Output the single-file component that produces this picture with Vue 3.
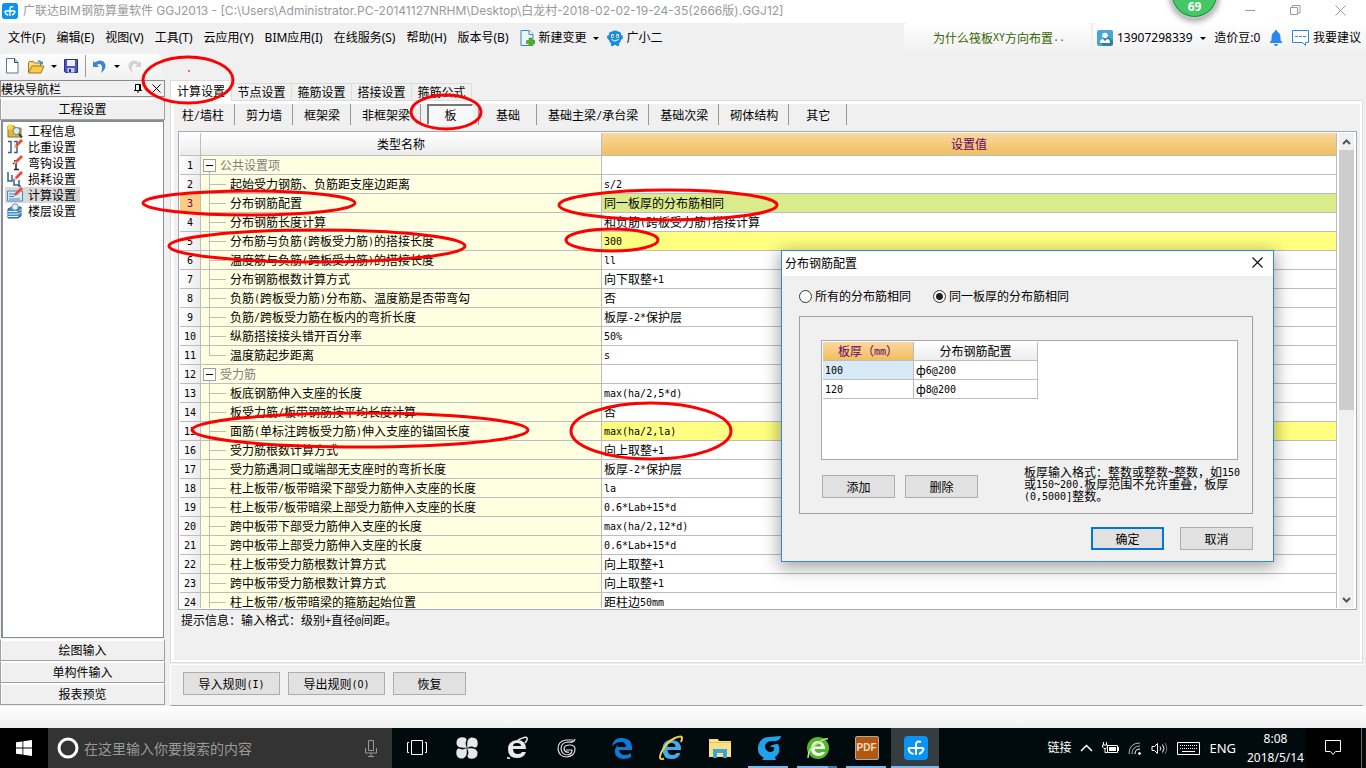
<script setup>
import { h, ref } from 'vue'

// Splits a label into Latin and Chinese runs so Latin runs get the half-width face.
const Mix = (props) =>
  (props.t.match(/[\x20-\x7e]+|[^\x20-\x7e]+/g) || []).map((run) =>
    /^[\x20-\x7e]/.test(run) ? h('span', { class: 'half' }, run) : run
  )
Mix.props = ['t']

const menus = ['文件(F)', '编辑(E)', '视图(V)', '工具(T)', '云应用(Y)', 'BIM应用(I)', '在线服务(S)', '帮助(H)', '版本号(B)']
const tabs = ['计算设置', '节点设置', '箍筋设置', '搭接设置', '箍筋公式']
const members = ['柱/墙柱', '剪力墙', '框架梁', '非框架梁', '板', '基础', '基础主梁/承台梁', '基础次梁', '砌体结构', '其它']
const nav = ['工程信息', '比重设置', '弯钩设置', '损耗设置', '计算设置', '楼层设置']
const folded = ['绘图输入', '单构件输入', '报表预览']
const rows = [
  { g: '公共设置项' },
  { n: '起始受力钢筋、负筋距支座边距离', v: 's/2' },
  { n: '分布钢筋配置', v: '同一板厚的分布筋相同', c: 'current' },
  { n: '分布钢筋长度计算', v: '和负筋(跨板受力筋)搭接计算' },
  { n: '分布筋与负筋(跨板受力筋)的搭接长度', v: '300', c: 'changed' },
  { n: '温度筋与负筋(跨板受力筋)的搭接长度', v: 'll' },
  { n: '分布钢筋根数计算方式', v: '向下取整+1' },
  { n: '负筋(跨板受力筋)分布筋、温度筋是否带弯勾', v: '否' },
  { n: '负筋/跨板受力筋在板内的弯折长度', v: '板厚-2*保护层' },
  { n: '纵筋搭接接头错开百分率', v: '50%' },
  { n: '温度筋起步距离', v: 's', last: true },
  { g: '受力筋' },
  { n: '板底钢筋伸入支座的长度', v: 'max(ha/2,5*d)' },
  { n: '板受力筋/板带钢筋按平均长度计算', v: '否' },
  { n: '面筋(单标注跨板受力筋)伸入支座的锚固长度', v: 'max(ha/2,la)', c: 'changed' },
  { n: '受力筋根数计算方式', v: '向上取整+1' },
  { n: '受力筋遇洞口或端部无支座时的弯折长度', v: '板厚-2*保护层' },
  { n: '柱上板带/板带暗梁下部受力筋伸入支座的长度', v: 'la' },
  { n: '柱上板带/板带暗梁上部受力筋伸入支座的长度', v: '0.6*Lab+15*d' },
  { n: '跨中板带下部受力筋伸入支座的长度', v: 'max(ha/2,12*d)' },
  { n: '跨中板带上部受力筋伸入支座的长度', v: '0.6*Lab+15*d' },
  { n: '柱上板带受力筋根数计算方式', v: '向上取整+1' },
  { n: '跨中板带受力筋根数计算方式', v: '向上取整+1' },
  { n: '柱上板带/板带暗梁的箍筋起始位置', v: '距柱边50mm' }
]
const mode = ref('same')
const rings = [
  [188, 80, 45, 23], [446, 112, 35, 17], [249, 203, 106, 12], [668, 205, 109, 15],
  [317, 246, 148, 16], [612, 240, 46, 11], [360, 430, 168, 17], [651, 431, 80, 28]
]
</script>

<template>
  <div class="desk">
    <header class="titlebar">
      <svg class="logo" width="16" height="16" viewBox="0 0 24 24"><rect width="24" height="24" rx="4" fill="#0a93f5" /><path d="M4.500 12h15M17 6q-5-2-5 3v10M4.500 12q0 5 5 6M19.500 12q0 4-4.500 6" fill="none" stroke="#fff" stroke-width="2.200" /></svg>
      <h1>广联达BIM钢筋算量软件 GGJ2013 - [C:\Users\Administrator.PC-20141127NRHM\Desktop\白龙村-2018-02-02-19-24-35(2666版).GGJ12]</h1>
      <div class="winbtns">
        <button aria-label="最小化"><svg width="11" height="11"><path d="M0 5.500h10" stroke="#999" /></svg></button>
        <button aria-label="还原"><svg width="11" height="11" fill="none" stroke="#999"><path d="M.5 2.500h7v7h-7zM2.500 2.500v-2h7.500v7.500h-2" /></svg></button>
        <button aria-label="关闭"><svg width="11" height="11"><path d="M.5.5l10 10M10.500.5l-10 10" stroke="#999" /></svg></button>
      </div>
    </header>

    <div class="menubar">
      <nav class="menus">
        <button v-for="m in menus" :key="m">{{ m }}</button>
        <button class="withicon"><svg width="15" height="16" viewBox="0 0 15 16"><path d="M1 .5h8l4 4v11H1z" fill="#eaf5fc" stroke="#3a86b8" /><path d="M9 .5v4h4" fill="#fff" stroke="#3a86b8" /><path d="M9 8h3v2.500h3v3h-3V16H9v-2.500H6.500v-3H9z" fill="#4db41e" stroke="#2c8a10" stroke-width=".5" /></svg>新建变更<i class="drop"></i></button>
        <button class="withicon mascot"><svg width="16" height="16" viewBox="0 0 16 16"><path d="M2 3q1-1.500 3-1.500 3-2 6 0 2 0 3 1.500v2q2 0 2 2t-2 3q-.5 2-2 3.500V16H9.500L9 15H7l-.5 1H4v-2.500Q2.500 12 2 10 0 9 0 7t2-2z" fill="#168fdf" /><ellipse cx="5.500" cy="6" rx="1.600" ry="2" fill="#fff" /><ellipse cx="10.500" cy="6" rx="1.600" ry="2" fill="#fff" /><circle cx="5.700" cy="6.300" r=".8" fill="#123" /><circle cx="10.300" cy="6.300" r=".8" fill="#123" /><path d="M4.500 9.500q3.500 3 7 0" fill="none" stroke="#fff" /></svg>广小二</button>
      </nav>
      <a class="tip" href="#"><Mix t="为什么筏板XY方向布置.." /></a>
      <div class="account">
        <button><svg width="16" height="16" viewBox="0 0 16 16"><rect width="16" height="16" rx="2" fill="#4aa6d5" /><path d="M9 5l7 6v3l-2 2H6l-3-4z" fill="#2e7faa" /><circle cx="8" cy="5.500" r="2.800" fill="#fff" /><path d="M3 13q0-4 3-4l2 2 2-2q3 0 3 4z" fill="#fff" /></svg>13907298339<i class="drop"></i></button>
        <span class="beans">造价豆:0</span>
        <button aria-label="消息" class="bell"><svg width="14" height="16" viewBox="0 0 14 16"><path d="M7 0q1.500 0 1.500 2Q11.500 3 11.500 8v2l2 3h-13l2-3V8q0-5 3-6Q5.500 0 7 0zM5 14h4q0 2-2 2t-2-2z" fill="#2a86f0" /></svg></button>
        <button><svg width="17" height="16" viewBox="0 0 17 16"><path d="M.5.500h16v12h-3v3l-3-3h-10z" fill="#fff" stroke="#2a86f0" /><path d="M3 6.500h11" stroke="#2a86f0" stroke-dasharray="3 1" /></svg>我要建议</button>
      </div>
    </div>

    <div class="toolbar">
      <button aria-label="新建"><svg width="13" height="16" viewBox="0 0 13 16"><path d="M.5.5h8l3.500 4v10.500H.5z" fill="#fff" stroke="#5b7592" /><path d="M8.500.5v4H12" fill="#cfe0f2" stroke="#2b3c55" /></svg></button>
      <button class="open" aria-label="打开"><svg width="17" height="15" viewBox="0 0 17 15"><path d="M.5 13.500V4l1-1.500h4l1 1.500h6v3" fill="#f7d87b" stroke="#9c7a1d" /><path d="M.5 14L4 7h12l-3 7z" fill="#fbc84a" stroke="#9c7a1d" /><path d="M9 2q3-2 5 1l1-1v3.500h-3l1-1q-2-2-4-2.500z" fill="#4f8fcc" /></svg><i class="drop"></i></button>
      <button class="save" aria-label="保存"><svg width="14" height="14" viewBox="0 0 14 14"><path d="M.5.5h13v13h-12l-1-1z" fill="#4a56c8" stroke="#27308c" /><path d="M3 1h8v6H3z" fill="#eef1fb" /><path d="M3.500 9h7v4.500h-7z" fill="#c8cdf0" /><path d="M5 10h2v3H5z" fill="#27308c" /></svg></button>
      <button class="undo" aria-label="撤销"><svg width="13" height="13" viewBox="0 0 13 13"><path d="M0 1l1.500 1.500Q9-2 12 3.500q2 5-4 9.500 2-5 .5-7.500Q7 3 4 5l2 2H0z" fill="#3b83d6" /></svg><i class="drop"></i></button>
      <button class="redo" aria-label="重做"><svg width="13" height="13" viewBox="0 0 13 13"><path d="M13 1l-1.500 1.500Q4-2 1 3.500q-2 5 4 9.500-2-5-.5-7.500Q6 3 9 5L7 7h6z" fill="#d3d3d3" /></svg></button>
    </div>

    <div class="work">
      <aside class="side">
        <div class="sidehead"><span>模块导航栏</span>
          <button aria-label="固定"><svg width="8" height="9"><path d="M1.500 6V.5h5V6M0 6.500h8M4 6.500V9M5.500 1v5" fill="none" stroke="#000" /></svg></button>
          <button aria-label="关闭"><svg width="9" height="9"><path d="M.5.5l8 8M8.500.5l-8 8" stroke="#000" /></svg></button>
        </div>
        <button class="fold">工程设置</button>
        <ul class="navlist">
          <li v-for="(n, i) in nav" :key="n" :class="{ on: i === 4 }">
            <svg width="17" height="16" viewBox="0 0 17 16">
              <template v-if="i === 0"><path d="M1 3h6l1 2h6v9H1z" fill="#e9b43a" stroke="#9a7014" /><path d="M1 0l1 2 2-1 1 2 2 1-2 1 0 2-2-1-2 1z" fill="#ffd83a" /><circle cx="9.500" cy="8" r="3.500" fill="#d8eefb" stroke="#6b7f94" /><path d="M12 11l3 3.500" stroke="#444" stroke-width="2" /></template>
              <template v-else-if="i < 4">
                <path v-if="i === 1" d="M1 2.500h3v11H1M7 2.500h3v11H7" fill="none" stroke="#37618f" stroke-width="1.500" />
                <path v-if="i === 2" d="M7 6h4M9 6v8M6 9l3-2M7 14.500h5" fill="none" stroke="#222" stroke-width="1.500" />
                <path v-if="i === 3" d="M1 1v9h4V4M7 8v6h5V9M11 15h3" fill="none" stroke="#37618f" stroke-width="1.500" />
                <path d="M7 9l1-3 6-6 2 2-6 6z" fill="#ec4a35" /><path d="M7 9l1-3 2 2z" fill="#f5c59a" />
              </template>
              <template v-else-if="i === 4"><path d="M.5 4h15v10H.5z" fill="#d5e9fa" stroke="#4f86bd" /><path d="M2 7h6M2 9.500h5M2 12h11" stroke="#4f86bd" /><path d="M7 9l1-3 6-6 2 2-6 6z" fill="#ec4a35" /></template>
              <template v-else><path d="M1 6l4-2h9v9l-3 2H1z" fill="#3f8fd0" stroke="#205f98" /><path d="M1 8.500h10l3-2M1 11h10l3-2M1 13.500h10" fill="none" stroke="#eaf6ff" /><circle cx="8" cy="4" r="3.200" fill="#e2f3fd" stroke="#7b8fa3" /><path d="M10 6.500l3 3" stroke="#777" stroke-width="2" /></template>
            </svg><span>{{ n }}</span>
          </li>
        </ul>
        <button v-for="f in folded" :key="f" class="fold">{{ f }}</button>
      </aside>

      <main class="main">
        <div class="tabs"><button v-for="(t, i) in tabs" :key="t" :class="{ on: i === 0 }">{{ t }}</button></div>
        <section class="panel">
          <div class="inner">
            <div class="members">
              <div v-for="(m, i) in members" :key="m" class="member"><button :class="{ on: i === 4 }"><Mix :t="m" /></button></div>
            </div>
            <div class="gridbox">
              <div class="gridview">
                <table class="grid">
                  <colgroup><col class="c0" /><col class="c1" /><col /></colgroup>
                  <thead><tr><th></th><th>类型名称</th><th class="hot">设置值</th></tr></thead>
                  <tbody>
                    <tr v-for="(r, i) in rows" :key="i" :class="r.c">
                      <th scope="row"><Mix :t="String(i + 1)" /></th>
                      <td class="name">
                        <div v-if="r.g" class="group"><button aria-label="折叠"></button>{{ r.g }}</div>
                        <div v-else class="leaf"><i :class="{ last: r.last }"></i><span><Mix :t="r.n" /></span></div>
                      </td>
                      <td class="val"><Mix v-if="r.v" :t="r.v" /></td>
                    </tr>
                  </tbody>
                </table>
              </div>
              <div class="scroll">
                <button aria-label="向上"><svg width="9" height="6"><path d="M1 5l3.500-3.500L8 5" fill="none" stroke="#555" stroke-width="2" /></svg></button>
                <div class="track"><div class="thumb"></div></div>
                <button aria-label="向下"><svg width="9" height="6"><path d="M1 1l3.500 3.500L8 1" fill="none" stroke="#555" stroke-width="2" /></svg></button>
              </div>
            </div>
            <p class="hint"><Mix t="提示信息：输入格式：级别+直径@间距。" /></p>
          </div>
        </section>
        <footer class="actions">
          <button class="btn wide"><Mix t="导入规则(I)" /></button>
          <button class="btn wide"><Mix t="导出规则(O)" /></button>
          <button class="btn">恢复</button>
        </footer>
      </main>
    </div>

    <div class="status"></div>

    <div class="taskbar">
      <button class="start" aria-label="开始"><svg width="16" height="16" viewBox="0 0 16 16"><path d="M0 2.300l6.500-.9v6.200H0zM7.300 1.300L16 0v7.600H7.300zM0 8.400h6.500v6.200L0 13.700zM7.300 8.400H16V16l-8.700-1.300z" fill="#fff" /></svg></button>
      <label class="search"><svg width="22" height="22"><circle cx="11" cy="11" r="9" fill="none" stroke="#fff" stroke-width="3" /></svg><input type="text" placeholder="在这里输入你要搜索的内容" /><svg width="12" height="17" viewBox="0 0 12 17"><path d="M3.500.5h5v10h-5zM.5 8v5h11V8M6 13v3.500M3 16.500h6" fill="none" stroke="#999" /></svg></label>
      <div class="apps first">
        <button aria-label="任务视图"><svg width="22" height="16" fill="none" stroke="#fff"><path d="M5.500.5h11v14h-11zM3 2.500H1.500v10H3M19 2.500h1.500v10H19" /></svg></button>
        <button aria-label="应用"><svg width="22" height="22" viewBox="0 0 22 22"><g fill="#e6e8e9"><path v-for="a in [0, 90, 180, 270]" :key="a" d="M11 10.500Q2 12 .5 7 0 0 6.500.3q4.500.2 4 3.200-2 3 .5 7z" :transform="`rotate(${a} 11 11)`" /></g></svg></button>
        <button aria-label="浏览器"><svg width="24" height="24" viewBox="0 0 24 24"><path d="M21 13H8q0 5 5 5 3 0 4-2h4q-2 6-9 6-9 0-9-9 0-8 9-9 9 0 9 9zM8 10h8q0-3-4-3t-4 3z" fill="#e8eaeb" /><path d="M3 21Q2 23 5 22M13 4q8-4 9-2 1 1-2 5" fill="none" stroke="#e8eaeb" stroke-width="1.500" /></svg></button>
        <button aria-label="应用"><svg width="20" height="20" viewBox="0 0 20 20" fill="none" stroke="#dfe3e5" stroke-width="1.200"><path d="M18 1q-1 4-8 3-6 1-6 7 1 6 7 6 4-1 4-5H9" /><path d="M16 2H9Q1 3 1 11q1 8 9 8 8-1 8-8 0-4-5-4-6 0-6 4 1 4 5 3" /></svg></button>
      </div>
      <div class="apps">
        <button aria-label="Edge"><svg width="22" height="22" viewBox="0 0 22 22"><path d="M1 10Q2 0 12 1q9 1 9 9v3H8q1 5 6 5 4 0 6-2v4q-3 2-8 2-9-1-8-9 1-5 6-7-3 1-4 4h9q0-5-5-5Q4 5 1 10z" fill="#0b7ad8" /></svg></button>
        <button aria-label="IE"><svg width="26" height="26" viewBox="0 0 26 26"><path d="M23 15H9.500q.5 5 5 5 3 0 4-2h4q-2 6-9 6-9 0-9-10 0-9 9-9 10 0 9.500 10zM9.500 12h8q0-4-4-4t-4 4z" fill="#43ade8" /><path d="M6 23.500Q0 26 3 18 8 7 17 3q7-3 7 0 0 2-1 4" fill="none" stroke="#f5cf3c" stroke-width="2" /></svg></button>
        <button aria-label="资源管理器"><svg width="22" height="20" viewBox="0 0 22 20"><path d="M0 1h9l1 2h12v16H0z" fill="#fddf86" /><path d="M0 4h22v1H0z" fill="#e7bf55" /><path d="M4 11h14v9h-4v-5H8v5H4z" fill="#35a8e0" /></svg></button>
        <button class="run" aria-label="应用"><svg width="24" height="26" viewBox="0 0 24 26"><path d="M24 1q-1 6-9 5-7 0-7 6 1 5 6 5 4-1 3-5h-4q2-3 8-3 4 8-3 13l1 3H5l2-2Q0 19 1 12 3 2 12 2z" fill="#20a2ee" /></svg></button>
        <button class="run more" aria-label="浏览器"><svg width="24" height="24" viewBox="0 0 24 24"><circle cx="12" cy="12" r="11" fill="#52b82a" /><path d="M19 13H8.500q.5 4 4.500 4 2 0 3-1h3q-2 4-6 4-8 0-8-8 1-7 7-7 7 1 7 8zM8.500 10.500h7q-.5-3-3.500-3t-3.500 3z" fill="#fff" /><path d="M2 22Q2 12 12 7q7-5 10-4" fill="none" stroke="#b9e88b" stroke-width="1.500" /></svg></button>
        <button class="run" aria-label="PDF"><span class="pdf">PDF</span></button>
        <button class="run on" aria-label="GGJ"><svg width="24" height="24" viewBox="0 0 24 24"><rect width="24" height="24" rx="4" fill="#0a93f5" /><path d="M4.500 12h15M17 6q-5-2-5 3v10M4.500 12q0 5 5 6M19.500 12q0 4-4.500 6" fill="none" stroke="#fff" stroke-width="2" /></svg></button>
      </div>
      <div class="tray">
        <span class="links">链接</span>
        <svg width="13" height="8"><path d="M1 7l5.500-5.500L12 7" fill="none" stroke="#fff" stroke-width="1.500" /></svg>
        <svg width="17" height="12" viewBox="0 0 17 12"><path d="M5.500 3.500h10v7h-10z" fill="none" stroke="#fff" /><path d="M7 5h7v4H7zM16 5h1v4h-1z" fill="#fff" /><path d="M1.500 0v3M4.500 0v3M.5 3h5v2L4 6.500H2L.5 5zM3 6v4.500h2" fill="#010b0e" stroke="#fff" /></svg>
        <svg width="14" height="13" viewBox="0 0 14 13" fill="none" stroke="#aeb4b6"><path d="M1 12Q1 1 12 1M4 12q0-8 8-8" /><path d="M7 12q0-5 5-5" stroke="#fff" /><circle cx="11.500" cy="11.500" r="1" fill="#fff" stroke="#fff" /></svg>
        <svg width="17" height="13" viewBox="0 0 17 13" fill="none" stroke="#fff"><path d="M1 4.500h2.500l3-3v10l-3-3H1zM9 4.500q1.500 2 0 4M11.500 2.500q3 4 0 8" /><path d="M14 1q3.500 5.500 0 11" stroke="#777" /></svg>
        <svg width="23" height="13" viewBox="0 0 23 13"><path d="M.5.5h22v12H.5z" fill="none" stroke="#fff" /><path d="M3 3.500h17M3 6.500h17" stroke="#fff" stroke-dasharray="1 1" /><path d="M5 9.500h13" stroke="#fff" /></svg>
        <span class="lang">ENG</span>
        <span class="clock">8:08<br />2018/5/14</span>
      </div>
      <button class="notify" aria-label="通知"><svg width="17" height="16"><path d="M.5.5h15v11h-5l-2.500 3-2.500-3h-5z" fill="none" stroke="#fff" /></svg></button>
    </div>

    <div class="dialog" role="dialog" aria-label="分布钢筋配置">
      <div class="dtitle"><span>分布钢筋配置</span><button aria-label="关闭"><svg width="11" height="11"><path d="M.5.5l10 10M10.500.5l-10 10" stroke="#111" stroke-width="1.200" /></svg></button></div>
      <div class="dbody">
        <div class="radios">
          <label><input v-model="mode" type="radio" value="all" />所有的分布筋相同</label>
          <label><input v-model="mode" type="radio" value="same" />同一板厚的分布筋相同</label>
        </div>
        <div class="frame">
          <div class="dgrid">
            <table>
              <thead><tr><th class="hot"><Mix t="板厚（mm）" /></th><th>分布钢筋配置</th></tr></thead>
              <tbody>
                <tr><td class="sel"><Mix t="100" /></td><td><Mix t="ф6@200" /></td></tr>
                <tr><td><Mix t="120" /></td><td><Mix t="ф8@200" /></td></tr>
              </tbody>
            </table>
          </div>
          <div class="frow">
            <button class="btn">添加</button><button class="btn">删除</button>
            <p><Mix t="板厚输入格式：整数或整数~整数，如150" /><br /><Mix t="或150~200.板厚范围不允许重叠，板厚" /><br /><Mix t="(0,5000]整数。" /></p>
          </div>
        </div>
        <div class="dactions"><button class="btn primary">确定</button><button class="btn">取消</button></div>
      </div>
    </div>

    <div class="badge">69</div>
    <svg class="marks" aria-hidden="true">
      <ellipse v-for="(r, i) in rings" :key="i" :cx="r[0]" :cy="r[1]" :rx="r[2]" :ry="r[3]" />
      <circle cx="189" cy="71" r="0.500" />
    </svg>
  </div>
</template>

<style>
body { background: #f0f0f0; }
.half { font-family: "DejaVu Sans Mono", monospace; font-size: 10px; line-height: 0; vertical-align: 1px; }
</style>

<style scoped>
* { box-sizing: border-box; }
.desk { position: relative; display: flex; flex-direction: column; height: 100vh; overflow: hidden; background: #f0f0f0; color: #000; font: 12px/16px "Noto Sans CJK SC", sans-serif; white-space: nowrap; }
button { font: inherit; color: inherit; background: none; border: 0; padding: 0; margin: 0; white-space: nowrap; }
svg { display: block; flex: none; }
p, h1, ul { margin: 0; padding: 0; }
.drop { width: 0; height: 0; border: 3px solid transparent; border-top-color: #000; border-bottom: 0; }

.titlebar { flex: none; display: flex; align-items: center; height: 23px; background: #fff; padding: 0 20px 2px 2px; }
.titlebar h1 { flex: 1; margin-left: 5px; font: 12px/16px Inter, "Noto Sans CJK SC", sans-serif; color: #999; }
.winbtns { display: flex; gap: 34px; }

.menubar { flex: none; display: flex; height: 31px; padding-bottom: 1px; font-family: "Noto Sans", "Noto Sans CJK SC", sans-serif; }
.menus { flex: 1; display: flex; align-items: center; gap: 11px; padding-left: 8px; }
.withicon { display: flex; align-items: center; gap: 4px; }
.withicon .drop { margin-left: 2px; }
.mascot { margin-left: -3px; }
.tip { display: flex; align-items: center; width: 187px; padding-left: 29px; margin-right: 2px; background: linear-gradient(#fff, #f0f0f0); border-radius: 4px 4px 0 0; color: #360; text-decoration: none; font-family: "Noto Sans CJK SC", sans-serif; }
.account { display: flex; align-items: center; width: 273px; padding: 0 5px 0 4px; justify-content: space-between; background: linear-gradient(#fff, #f0f0f0); border-radius: 4px 0 0 0; }
.account button { display: flex; align-items: center; gap: 4px; }
.account .drop { margin-left: 3px; }

.toolbar { flex: none; align-self: flex-start; display: flex; align-items: center; width: 161px; height: 24px; padding-left: 6px; margin-bottom: 2px; background: linear-gradient(#fdfdfd, #f2f2f2); border-radius: 4px; }
.toolbar button { display: flex; align-items: center; }
.open { margin-left: 9px; }
.toolbar .open .drop, .toolbar .undo .drop { margin-left: 6px; }
.toolbar .undo .drop { margin-left: 8px; }
.toolbar .save { margin-left: 7px; padding-right: 7px; }
.toolbar .undo { height: 22px; padding-left: 7px; border-left: 1px solid #999; }
.toolbar .redo { margin-left: 8px; }

.work { flex: 1; min-height: 0; display: flex; gap: 5px; padding-right: 3px; }
.side { width: 165px; display: flex; flex-direction: column; padding-bottom: 1px; }
.sidehead { flex: none; display: flex; align-items: center; height: 17px; margin-bottom: 1px; border: 1px solid #8c8c8c; padding-right: 3px; gap: 10px; }
.sidehead span { flex: 1; }
.fold { flex: none; height: 22px; border: 1px solid #a0a0a0; border-top-color: #fff; box-shadow: inset 1px 1px #fff; background: #f0f0f0; }
.navlist { flex: 1; list-style: none; border: 2px solid #898c95; border-right-width: 1px; border-bottom-width: 1px; background: #fff; padding: 1px 2px; margin: 0 1px 1px 1px; }
.navlist li { display: flex; width: 75px; align-items: center; height: 16px; padding-left: 2px; gap: 4px; }
.navlist li.on { background: #d9d9d9; }

.main { flex: 1; min-width: 0; display: flex; flex-direction: column; }
.tabs { flex: none; display: flex; align-items: flex-end; height: 20px; }
.tabs button { width: 60px; height: 17px; border: 1px solid #dcdcdc; border-width: 1px 1px 0 0; }
.tabs button.on { width: 62px; height: 21px; margin-bottom: -1px; background: #fff; border-left-width: 1px; }
.panel { flex: 1; min-height: 0; display: flex; border: 1px solid #dcdcdc; background: #fff; padding: 3px 2px 2px 3px; }
.tabs .on { position: relative; }
.inner { flex: 1; min-width: 0; display: flex; flex-direction: column; background: #f0f0f0; }
.members { flex: none; display: flex; height: 21px; margin-bottom: 6px; }
.member { display: flex; justify-content: center; min-width: 58px; padding: 0 10px 0 11px; border-right: 1px solid #999; }
.member:first-child { padding-left: 8px; }
.member:nth-child(5) { padding: 0 5px 0 6px; }
.member .on { flex: 1; border: 1px solid #fff; border-top: 2px solid #777; border-left: 2px solid #777; background: #f8f8f8; }

.gridbox { flex: 1; min-height: 0; display: flex; margin: 0 3px 0 4px; border: 1px solid #a5a9b0; background: #fff; padding: 1px; }
.gridview { flex: 1; overflow: hidden; }
table { border-collapse: separate; border-spacing: 0; table-layout: fixed; }
.grid { width: 100%; }
.c0 { width: 21px; }
.c1 { width: 401px; }
th, td { height: 19px; padding: 0; line-height: 18px; font-weight: 400; border: 0 solid #bdbdbd; border-width: 0 1px 1px 0; text-align: left; overflow: hidden; }
th { text-align: center; background: linear-gradient(#fff, #ececec); }
.grid thead th { height: 23px; line-height: 22px; }
.grid tbody th { background: linear-gradient(90deg, #fff, #ececec); }
.grid tbody .current th { background: #ffcc85; color: #606; }
th.hot, .grid thead .hot { background: linear-gradient(#fad7a0, #f0bf60); color: #606; }
.name { background: #ffffe1; }
.val { padding-left: 2px; }
.current .val { background: #d9eb8b; }
.changed .val { background: #ffff80; }
.group { display: flex; align-items: center; height: 18px; padding-left: 2px; gap: 4px; color: #808080; background: linear-gradient(#bdbdbd, #bdbdbd) 8px 16px / 1px 2px no-repeat; }
.group button { width: 13px; height: 13px; border: 1px solid #a0a0a0; background: linear-gradient(#000, #000) 2px 5px / 7px 1px no-repeat #fff; }
.leaf { display: flex; height: 18px; padding-left: 8px; }
.leaf i { width: 21px; background: linear-gradient(#bdbdbd, #bdbdbd) 0 9px / 17px 1px no-repeat, linear-gradient(#bdbdbd, #bdbdbd) 0 0 / 1px 18px no-repeat; }
.leaf i.last { background-size: 17px 1px, 1px 10px; }
.scroll { display: flex; flex-direction: column; align-items: center; width: 15px; margin: 0 1px 0 2px; background: #f0f0f0; }
.scroll button { height: 17px; width: 15px; display: flex; align-items: center; justify-content: center; }
.track { flex: 1; align-self: stretch; }
.thumb { height: 59%; background: #cdcdcd; }
.hint { flex: none; height: 50px; padding: 2px 7px; }
.actions { flex: none; display: flex; gap: 8px; height: 42px; margin-top: 1px; padding: 7px 12px; border-bottom: 1px solid #a0a0a0; border-top: 1px solid #fff; border-left: 1px solid #fff; }
.btn { flex: none; width: 73px; height: 23px; border: 1px solid #adadad; background: #e1e1e1; line-height: 20px; }
.btn.wide { width: 97px; }
.status { flex: none; height: 22px; background: linear-gradient(#fff, #f0f0f0); }

.taskbar { flex: none; display: flex; height: 40px; background: #010b0e; color: #fff; }
.start { width: 48px; background: #000; display: flex; align-items: center; justify-content: center; }
.search { width: 344px; display: flex; align-items: center; gap: 5px; padding: 0 15px 0 9px; background: #333; }
.search input { flex: 1; min-width: 0; padding: 0; border: 0; background: none; outline: 0; font: 14px/20px "Noto Sans CJK SC", sans-serif; color: #fff; }
.search input::placeholder { color: #999; opacity: 1; }
.apps { display: flex; }
.apps.first { margin-right: 5px; }
.apps button { position: relative; width: 49px; display: flex; align-items: center; justify-content: center; }
.apps.first button { width: 50px; }
.run::after { content: ""; position: absolute; left: 4px; right: 5px; bottom: 0; height: 2px; background: #76b9ed; }
.run.more::after { background: linear-gradient(90deg, #76b9ed 31px, #4a7ba3 31px); }
.run.on::after { left: 0; right: 1px; }
.run.on { background: linear-gradient(#353d40, #353d40) 0 0 / 48px 100% no-repeat; }
.pdf { width: 24px; height: 24px; border: 1px solid #aaa; border-radius: 2px; background: #b4580f; color: #f3dcc6; font: bold 10px/22px "Liberation Sans", sans-serif; }
.tray { flex: 1; display: flex; justify-content: flex-end; align-items: center; gap: 9px; font-family: "Noto Sans", "Noto Sans CJK SC", sans-serif; }
.lang { font-size: 13px; }
.clock { width: 61px; text-align: center; line-height: 19px; }
.notify { display: flex; align-items: center; justify-content: center; width: 56px; background: #000; border-right: 1px solid #666; margin-right: 4px; }

.dialog { position: absolute; left: 781px; top: 250px; width: 493px; border: 1px solid #2f86e4; background: #f0f0f0; box-shadow: 0 4px 16px 2px rgba(0, 0, 0, .35); }
.dtitle { display: flex; align-items: center; justify-content: space-between; height: 25px; padding: 0 10px 2px 3px; background: #fff; }
.dbody { padding: 12px 20px 11px 17px; }
.radios { display: flex; gap: 22px; }
.radios label { display: flex; align-items: center; height: 16px; gap: 3px; }
.radios input { appearance: none; width: 13px; height: 13px; margin: 0; border: 1px solid #333; border-radius: 50%; background: #fff; }
.radios input:checked { background: radial-gradient(circle, #222 3px, #fff 4px); }
.frame { margin-top: 12px; border: 1px solid #a0a0a0; padding: 23px 14px 11px 21px; }
.dgrid { height: 120px; padding: 1px; border: 1px solid #a5a9b0; background: #fff; }
.dgrid table { width: 215px; }
.dgrid th:first-child { width: 91px; }
.dgrid td { padding-left: 2px; }
.dgrid .sel { background: #d8e9f7; }
.frow { display: flex; gap: 10px; padding: 6px 0 0 1px; }
.frow .btn { margin-top: 9px; }
.frow p { margin-left: 36px; line-height: 12px; }
.dactions { display: flex; justify-content: flex-end; gap: 16px; margin-top: 13px; }
.primary { border: 2px solid #0078d7; line-height: 18px; }

.badge { position: absolute; left: 1170px; top: -30px; width: 49px; height: 49px; border: 2px solid #c5c5c5; border-radius: 50%; background: #45c765; box-shadow: inset 0 0 0 1px #1b8f3e, 0 2px 6px rgba(0, 0, 0, .4); color: #fff; font: bold 12px/16px "Noto Sans", sans-serif; text-align: center; padding-top: 27px; }
.marks { position: absolute; inset: 0; width: 100%; height: 100%; pointer-events: none; fill: none; stroke: #f00; stroke-width: 3px; }
.marks circle { stroke-width: 1px; }
</style>
